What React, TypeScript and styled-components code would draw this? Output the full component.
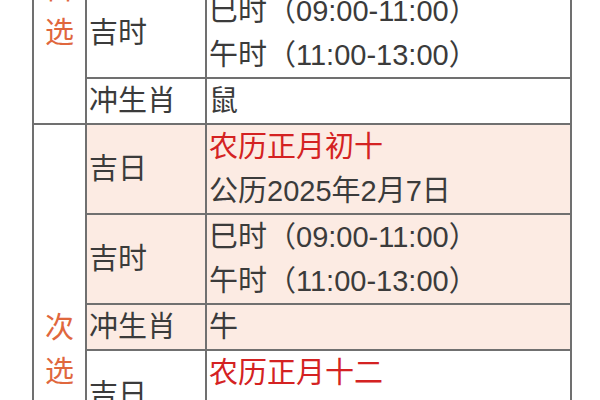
import React from "react";
import styled, {createGlobalStyle} from "styled-components";

const GlobalStyle = createGlobalStyle`
  html, body {
    margin: 0;
    padding: 0;
    background: #ffffff;
  }
  body {
    font-family: "Liberation Sans", "Noto Sans CJK SC", sans-serif;
    overflow: hidden;
  }
`;

const Page = styled.div`
  width: 600px;
  height: 400px;
  overflow: hidden;
  padding-left: 32px;
  box-sizing: border-box;
`;

// the screenshot is a scrolled view of a longer table, so the top of the first group is cut off
const Table = styled.table`
  margin-top: -103px;
  border-collapse: separate;
  border-spacing: 0;
  table-layout: fixed;
  width: 540px;
  border-left: 2px solid #707070;
  border-top: 2px solid #707070;
  font-size: 29px;
  line-height: 44px;
  color: #3b3b3b;
`;

const Cell = styled.td<{ $tint?: boolean }>`
  padding: 0 0 0 2px;
  border-right: 2px solid #707070;
  border-bottom: 2px solid #707070;
  background: ${p => (p.$tint ? "#fcebe3" : "#ffffff")};
  vertical-align: middle;
  white-space: nowrap;
`;

const GroupCell = styled(Cell)`
  padding: 0;
  text-align: center;
`;

const GroupLabel = styled.span`
  display: block;
  width: 1em;
  margin: 0 auto;
  white-space: normal;
  color: #e0673d;
`;

const Line = styled.div<{ $red?: boolean }>`
  color: ${p => (p.$red ? "#d42222" : "inherit")};
`;

type DateItem = {
  lunar: string;
  solar: string;
  hours: string[];
  zodiac: string;
};

type Group = {
  label: string;
  dates: DateItem[];
};

const hours = ["巳时（09:00-11:00）", "午时（11:00-13:00）"];

const groups: Group[] = [
  {
    label: "首选",
    dates: [{lunar: "农历正月初九", solar: "公历2025年2月6日", hours, zodiac: "鼠"}],
  },
  {
    label: "次选",
    dates: [
      {lunar: "农历正月初十", solar: "公历2025年2月7日", hours, zodiac: "牛"},
      {lunar: "农历正月十二", solar: "公历2025年2月9日", hours, zodiac: "兔"},
    ],
  },
];

const App = () => {
  return (
    <Page>
      <GlobalStyle/>
      <Table>
        <colgroup>
          <col style={{width: 53}}/>
          <col style={{width: 120}}/>
          <col style={{width: 365}}/>
        </colgroup>
        <tbody>
          {groups.map(group =>
            group.dates.map((d, i) => {
              const tint = group.label === "次选" && i % 2 === 0;
              return (
                <React.Fragment key={group.label + i}>
                  <tr>
                    {i === 0 && (
                      <GroupCell rowSpan={group.dates.length * 3}>
                        <GroupLabel>{group.label}</GroupLabel>
                      </GroupCell>
                    )}
                    <Cell $tint={tint}>吉日</Cell>
                    <Cell $tint={tint}>
                      <Line $red>{d.lunar}</Line>
                      <Line>{d.solar}</Line>
                    </Cell>
                  </tr>
                  <tr>
                    <Cell $tint={tint}>吉时</Cell>
                    <Cell $tint={tint}>
                      {d.hours.map(h => <Line key={h}>{h}</Line>)}
                    </Cell>
                  </tr>
                  <tr>
                    <Cell $tint={tint}>冲生肖</Cell>
                    <Cell $tint={tint}>{d.zodiac}</Cell>
                  </tr>
                </React.Fragment>
              );
            })
          )}
        </tbody>
      </Table>
    </Page>
  );
};

export default App;
